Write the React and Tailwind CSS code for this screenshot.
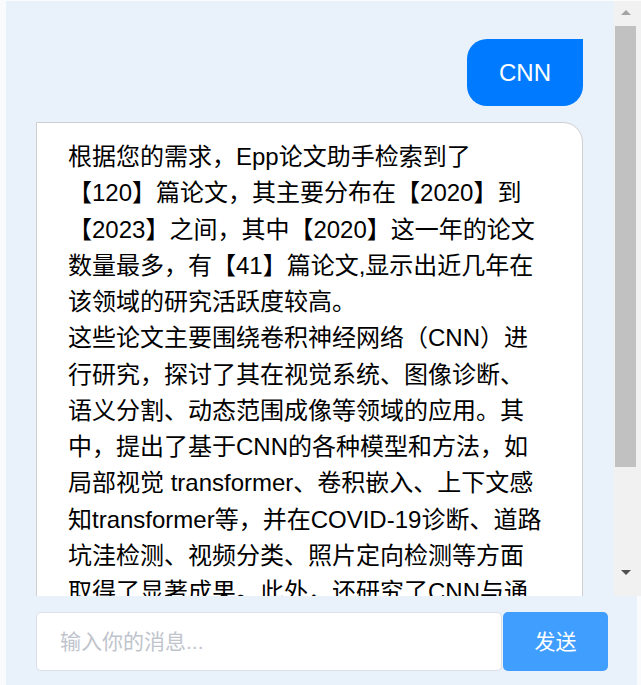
import { useState } from "react";

const answer = [
  "根据您的需求，Epp论文助手检索到了【120】篇论文，其主要分布在【2020】到【2023】之间，其中【2020】这一年的论文数量最多，有【41】篇论文,显示出近几年在该领域的研究活跃度较高。",
  "这些论文主要围绕卷积神经网络（CNN）进行研究，探讨了其在视觉系统、图像诊断、语义分割、动态范围成像等领域的应用。其中，提出了基于CNN的各种模型和方法，如局部视觉 transformer、卷积嵌入、上下文感知transformer等，并在COVID-19诊断、道路坑洼检测、视频分类、照片定向检测等方面取得了显著成果。此外，还研究了CNN与通用模型的结合方式，以及其在医学图像处理中的表现。",
];

const font = "font-['Liberation_Sans','Noto_Sans_CJK_SC',sans-serif]";

function ScrollBar() {
  return (
    <div className="flex w-[27px] flex-col bg-[#f1f1f1] pr-[4px]">
      <div className="flex h-[25px] items-center justify-center pb-[2px]">
        <div className="h-0 w-0 border-x-[5px] border-b-[5px] border-x-transparent border-b-[#a3a3a3]" />
      </div>
      <div className="mx-px h-[441px] bg-[#c1c1c1]" />
      <div className="flex-1" />
      <div className="flex h-[28px] items-start justify-center pt-[2px]">
        <div className="h-0 w-0 border-x-[5px] border-t-[5px] border-x-transparent border-t-[#505050]" />
      </div>
    </div>
  );
}

export default function App() {
  const [text, setText] = useState("");

  return (
    <div className={`flex h-screen flex-col bg-[#fafbfc] pl-[6px] pt-px ${font} [text-spacing-trim:space-all]`}>
      <div className="flex h-[595px]">
        <div className="flex flex-1 flex-col gap-4 overflow-hidden bg-[#e9f1fb] pl-[30px] pr-[31px] pt-[38px]">
          <div className="flex justify-end">
            <div className="rounded-[20px] rounded-tr-none bg-[#007bff] px-8 py-4 text-[24px] leading-[35px] text-white">
              CNN
            </div>
          </div>
          <div className="rounded-tr-[20px] border border-[#cfcfcf] bg-white pb-6 pl-[31px] pr-[37px] pt-4 text-[24px] leading-[36.25px] text-black">
            {answer.map((p, i) => (
              <p key={i}>{p}</p>
            ))}
          </div>
        </div>
        <ScrollBar />
      </div>
      <div className="mr-[4px] flex flex-1 items-start gap-px bg-[#e9f1fb] pl-[30px] pt-[16px]">
        <input
          value={text}
          onChange={(e) => setText(e.target.value)}
          placeholder="输入你的消息..."
          className="h-[59px] w-[466px] rounded-[5px] border border-[#dcdfe6] bg-white px-[23px] text-[21px] text-[#333] outline-none placeholder:text-[#c0c4cc]"
        />
        <button className="h-[59px] w-[105px] rounded-[5px] bg-[#409eff] text-[21px] text-white">
          发送
        </button>
      </div>
    </div>
  );
}
